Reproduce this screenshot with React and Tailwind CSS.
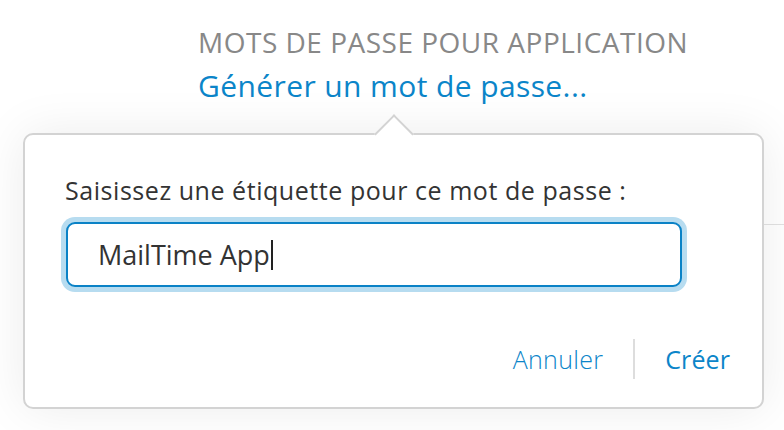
export default function App() {
  return (
    <div
      className="relative w-[784px] h-[430px] overflow-hidden bg-white"
      style={{ fontFamily: '"Open Sans", "Noto Sans", sans-serif' }}
    >
      {/* line of the page behind the popover */}
      <div className="absolute left-[762px] top-[224px] w-[30px] h-px bg-[#e2e2e2]" />

      <div className="pl-[198px] pt-[28px]">
        <div className="text-[28px] leading-none text-[#888888] tracking-[0.5px]">
          MOTS DE PASSE POUR APPLICATION
        </div>
        <div className="mt-[15px] text-[30px] leading-none text-[#0b85c9] tracking-[0.4px]">
          Générer un mot de passe...
        </div>
      </div>

      <div className="relative ml-[23px] mt-[32px] w-[741px]">
        <div className="h-[276px] rounded-[10px] border-2 border-[#d3d3d3] bg-white shadow-[0_0_50px_rgba(0,0,0,0.08)] pl-[40px] pt-[43px] flex flex-col">
          <div className="text-[25px] leading-none text-[#333333] tracking-[0.55px]">
            Saisissez une étiquette pour ce mot de passe :
          </div>
          <div className="mt-[19px] ml-[1px] h-[65px] w-[616px] rounded-[9px] border-2 border-[#0a82c6] bg-white shadow-[0_0_0_5px_#b7dcf0] flex items-center pl-[30px]">
            <span className="text-[27px] leading-none text-[#333333]">
              MailTime App
            </span>
            <span className="ml-[1px] w-[2px] h-[30px] bg-[#222222]" />
          </div>
          <div className="mt-auto mb-[28px] flex items-center justify-end pr-[32px]">
            <span className="text-[25px] leading-none font-light text-[#0b85c9] tracking-[0.3px]">
              Annuler
            </span>
            <span className="mx-[30px] w-[2px] h-[40px] bg-[#dddddd]" />
            <span className="text-[25px] leading-none font-medium text-[#0b85c9] tracking-[0.1px]">
              Créer
            </span>
          </div>
        </div>
        {/* caret */}
        <div className="absolute left-[357px] top-[-13px] w-[28px] h-[28px] rotate-45 bg-white border-l-2 border-t-2 border-[#d3d3d3]" />
      </div>
    </div>
  )
}
